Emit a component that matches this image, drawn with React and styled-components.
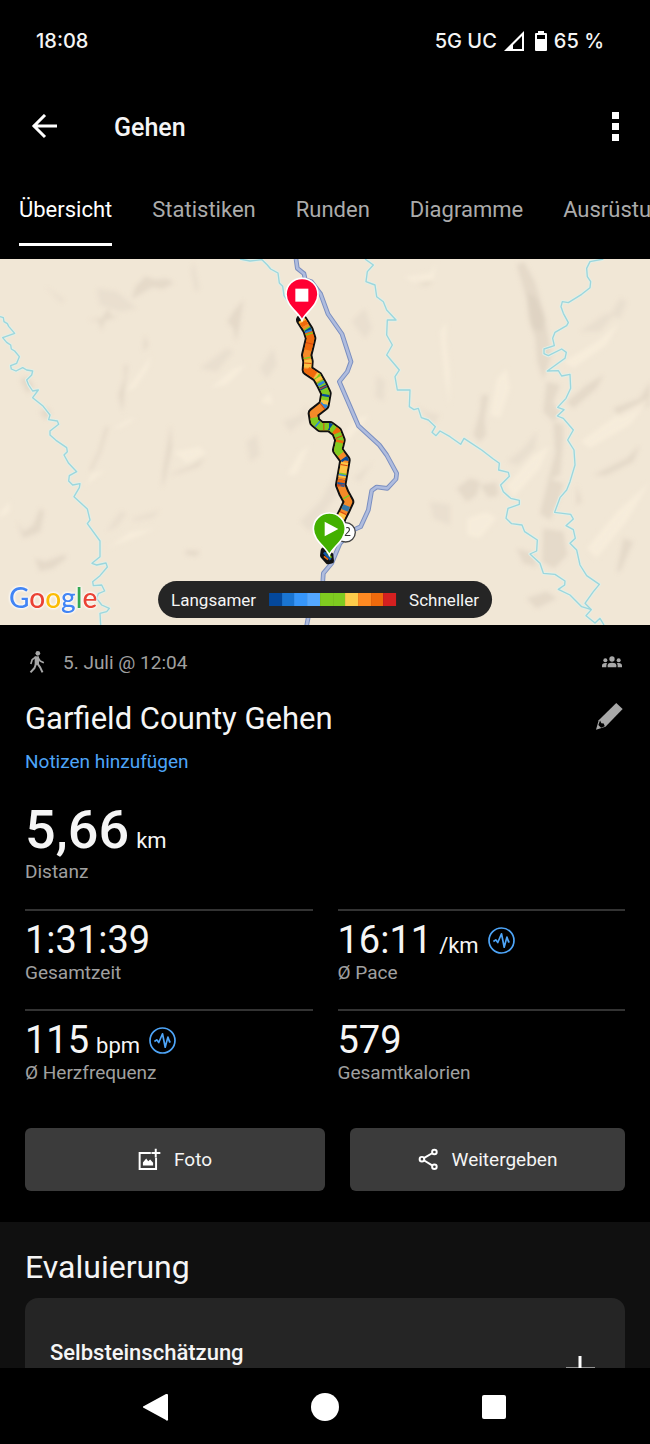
import React, { useState } from 'react';
import styled, { createGlobalStyle } from 'styled-components';

const GlobalStyle = createGlobalStyle`
  * {
    box-sizing: border-box;
  }

  body {
    margin: 0;
    background: #000;
    color: #f5f5f5;
    font-family: Roboto, 'Liberation Sans', sans-serif;
  }

  button {
    font: inherit;
    color: inherit;
    background: none;
    border: none;
    padding: 0;
    cursor: pointer;
  }

  svg {
    display: block;
    flex-shrink: 0;
  }
`;

const Screen = styled.div`
  display: flex;
  flex-direction: column;
  height: 100vh;
`;

const StatusBar = styled.div`
  display: flex;
  align-items: center;
  justify-content: space-between;
  height: 82px;
  padding: 0 46px 0 36px;
  flex-shrink: 0;
  font-family: Inter, Roboto, sans-serif;
  font-size: 20px;
  font-weight: 500;
`;

const StatusIcons = styled.div`
  display: flex;
  align-items: center;
  gap: 7px;
`;

const Battery = styled.svg`
  margin-left: 4px;
`;

const AppBar = styled.header`
  display: flex;
  align-items: center;
  height: 89px;
  padding: 0 28px 0 30px;
  flex-shrink: 0;
`;

const AppTitle = styled.h1`
  flex: 1;
  margin: 0 0 0 56px;
  padding-top: 2px;
  font-size: 25px;
  font-weight: 500;
`;

const TabBar = styled.nav`
  display: flex;
  gap: 40px;
  height: 88px;
  padding: 0 0 13px 19px;
  overflow: hidden;
  flex-shrink: 0;
`;

const Tab = styled.button`
  flex-shrink: 0;
  font-size: 22px;
  color: ${({ $active }) => ($active ? '#ffffff' : '#ababab')};
  border-top: 5px solid transparent;
  border-bottom: 3px solid ${({ $active }) => ($active ? '#ffffff' : 'transparent')};
`;

const Content = styled.main`
  flex: 1;
  min-height: 0;
  overflow: hidden;
`;

const MapArea = styled.div`
  position: relative;
  height: 366px;
  background: #f1e7d6;

  > svg {
    width: 100%;
    height: 100%;
  }
`;

const GoogleMark = styled.div`
  position: absolute;
  left: 9px;
  bottom: 11px;
  font-family: Lato, sans-serif;
  font-size: 28px;
  line-height: 34px;
  font-weight: 500;
  text-shadow: 0 0 3px #fff, 0 0 3px #fff, 0 0 2px #fff;
`;

const Letter = styled.span`
  color: ${({ $color }) => $color};
`;

const Legend = styled.div`
  position: absolute;
  left: 50%;
  bottom: 7px;
  transform: translateX(-50%);
  display: flex;
  align-items: center;
  gap: 13px;
  height: 37px;
  padding: 0 13px;
  border-radius: 19px;
  background: #252525;
  font-size: 17px;
  line-height: 20px;
  white-space: nowrap;
`;

const Scale = styled.div`
  display: flex;
  width: 127px;
  height: 13px;
`;

const ScaleStep = styled.span`
  flex: 1;
  background: ${({ $color }) => $color};
`;

const Summary = styled.section`
  padding: 23px 25px 31px;
`;

const MetaRow = styled.div`
  display: flex;
  align-items: center;
  gap: 15px;
  height: 28px;
  padding: 0 3px 0 2px;
  font-size: 19px;
  color: #a0a0a0;
`;

const MetaDate = styled.span`
  flex: 1;
`;

const TitleRow = styled.div`
  display: flex;
  align-items: center;
  justify-content: space-between;
  margin-top: 22px;
  padding-right: 2px;
`;

const EditButton = styled.button`
  padding-bottom: 6px;
`;

const ActivityName = styled.h2`
  margin: 0;
  font-size: 31px;
  line-height: 42px;
  font-weight: 400;
`;

const NotesLink = styled.a`
  display: block;
  margin-top: 10px;
  font-size: 19px;
  line-height: 24px;
  color: #4ea5f8;
  text-decoration: none;
`;

const Stat = styled.div`
  height: 100px;
  padding-top: 9px;
  border-top: 2px solid #333333;
`;

const StatValue = styled.div`
  display: flex;
  align-items: baseline;
  gap: 7px;
  font-size: ${({ $large }) => ($large ? '54px' : '38px')};
  line-height: ${({ $large }) => ($large ? '54px' : '40px')};
  font-weight: ${({ $large }) => ($large ? 500 : 400)};

  svg {
    align-self: center;
    margin-left: 2px;
  }
`;

const Unit = styled.span`
  font-size: 22px;
  line-height: 24px;
  font-weight: 400;
`;

const StatLabel = styled.div`
  margin-top: ${({ $large }) => ($large ? '3px' : '1px')};
  font-size: 19px;
  line-height: 24px;
  color: #a0a0a0;
`;

const Hero = styled.div`
  margin-top: 29px;
  height: 106px;
`;

const StatGrid = styled.div`
  display: grid;
  grid-template-columns: 1fr 1fr;
  column-gap: 25px;
`;

const Actions = styled.div`
  display: grid;
  grid-template-columns: 12fr 11fr;
  gap: 25px;
  margin-top: 19px;
`;

const ActionButton = styled.button`
  display: flex;
  align-items: center;
  justify-content: center;
  gap: 13px;
  height: 63px;
  border-radius: 6px;
  background: #3b3b3b;
  font-size: 19px;
`;

const Evaluation = styled.section`
  padding: 23px 25px 0;
  background: #101010;
`;

const SectionTitle = styled.h2`
  margin: 0;
  font-size: 32px;
  line-height: 44px;
  font-weight: 400;
`;

const Card = styled.div`
  display: flex;
  align-items: flex-start;
  justify-content: space-between;
  margin-top: 9px;
  padding: 40px 30px 40px 25px;
  border-radius: 13px;
  background: #252525;
`;

const CardTitle = styled.h3`
  margin: 0;
  font-size: 22px;
  line-height: 30px;
  font-weight: 500;
`;

const AddButton = styled.button`
  margin-top: 18px;
`;

const SystemNav = styled.nav`
  display: flex;
  align-items: center;
  justify-content: center;
  gap: 141px;
  height: 76px;
  padding-top: 2px;
  flex-shrink: 0;
  background: #000;
`;

const paceColors = [
  '#04489b', '#1a75d2', '#3696fa', '#54a8ff', '#7fcb20',
  '#7fcb20', '#fdcc4a', '#ff8a22', '#ef6a0c', '#d42020',
];

const googleLetters = [
  ['G', '#4285f4'],
  ['o', '#ea4335'],
  ['o', '#fbbc05'],
  ['g', '#4285f4'],
  ['l', '#34a853'],
  ['e', '#ea4335'],
];

const tabs = ['Übersicht', 'Statistiken', 'Runden', 'Diagramme', 'Ausrüstung'];

const stats = [
  { value: '1:31:39', label: 'Gesamtzeit' },
  { value: '16:11', unit: '/km', label: 'Ø Pace', chart: true },
  { value: '115', unit: 'bpm', label: 'Ø Herzfrequenz', chart: true },
  { value: '579', label: 'Gesamtkalorien' },
];

// Terrain shading, darker slopes first and lit slopes after
const slopes = [
  'M395 132l12-38 30-30 25 10 40-2 20 12-35 18-30-6-30 18z',
  'M265 195l40-5 20-30 8 22 22 2-40 12-12 30-6-28z',
  'M700 170l30-35-10 70-12 55-8-40-18-20z',
  'M430 290l4-50 10 30zM355 420l18-50 0-40 10 0-8 70-8 70z',
  'M270 640l25-50 20-70 12-8-25 80-30 60z',
  'M105 910l30 10 60-22 4 12-40 30-40 8z',
  'M118 470l28-10 6 18-16 16zM60 375l22-10 20 30-20 20z',
  'M485 700l5-60 12-70 10-60 4 70-20 90z',
  'M505 660l70-28 40-25-20 28-60 20z',
  'M560 885l40 3-10 16-35-6zM50 800l20 30 30-20 20-50 12 10-12 60-50 20z',
  'M1550 30l22-10 32 60 26 90 10 50 14 80-24 75-18-55-6-70-20-60-6-60z',
  'M1580 110l30 20 26 60-10 40-30-10z',
  'M1420 540l20-70 5-50 20 0-12 70 5 50-20 20z',
  'M1640 380l40 10-20 50 20 40-20 20-30-30z',
  'M1660 500l30 10 0 40-10 110-36 15 22-80z',
  'M1646 670l44 15-14 50-26 60-30-20z',
  'M1370 700l40-30 30 10-10 40-30 20zM1440 690l50-8 5 40-30 5z',
  'M1630 820l60 10 12 70-40 40-35-20z',
  'M1700 440l60-50 50-30-20 40-70 60zM1840 460l80-30 30-50 0 70-90 40z',
  'M1780 660l100-50 40-40-20 50-80 40zM1730 690l14 50-14 10z',
  'M1870 850l30 10-40 90-10 0zM1580 1030l60-20 30 20-60 30z',
  'M1240 70l60 10-20 12-30-5zM1550 880l50 15 10 40-40-10z',
];

const faintSlopes = [
  'M1130 360l25 20-5 60-25-15zM1055 200l40-40 20 60-20 30z',
  'M780 340l40-60 10 50-30 40zM850 500l50-20 20-30 0 40-50 40z',
  'M900 800l60-60 60-110-10 90-80 110zM1060 670l60-50-40 60z',
  'M400 790l80-25-20 22-60 12zM320 830l40-60 20 5-30 40z',
  'M135 95l60 40-10 8zM580 20l18 80-12 10-12-60z',
  'M290 100l60 10 60 50-50 10-60-20zM600 340l80-60 20 10-50 60z',
  'M1740 230l70-50 40-10-50 60zM1830 180l30-50 20 10-20 50z',
  'M1520 620l50-40 40-50-5 50-50 50zM1250 450l30 20 40 10-20 30z',
  'M1290 740l60 10 0 60-50-20zM740 560l30-20 10 60-30 20z',
];

const ridges = [
  'M1210 65l80-10 20-30-10 50-50 12z',
  'M1320 230l20-30-2 60 12 90-2 100-14-80z',
  'M1470 480l20-110 30-30 10 60-30 90z',
  'M1520 690l80-90 50-30-30 70-80 90z',
  'M1690 320l100-60 70-60-40 70-100 70z',
  'M1740 560l110-80 100-50-60 80-120 70z',
  'M1760 880l90-110 100-90-70 120-90 110z',
  'M1400 790l60-20 30 20-50 60-40-10z',
  'M255 695l20-40 45-10-30 20zM375 410l30-40 50-70-10 40-40 60z',
  'M320 880l70-50 80-10-70 30zM520 590l80-15 20 20-60 30z',
  'M630 400l70-60 40-10-60 60zM780 440l30-30 10 40z',
  'M1010 560l60-70 40-10-70 80zM860 660l40-70 30-20-40 90z',
  'M0 770l30-30 0 30-30 20zM340 520l50-30 20 0-50 30z',
];

const rivers = [
  'M0 185L10 188 12 200 22 206 26 214 44 235 8 248 20 262 32 270 34 282 44 288 58 305 50 325 32 332 34 342 48 348 68 338 80 345 98 348 95 360 80 375 86 390 98 408 115 405 98 428 128 452 150 480 146 494 172 498 176 508 150 528 150 540 168 556 200 578 202 590 192 600 206 625 230 650 208 662 206 678 218 690 240 686 238 698 222 725 262 762 270 795 262 806 300 858 300 905 276 925 290 930 318 924 322 936 300 962 278 980 280 992 305 990 314 1008 295 1016 290 1030 305 1050 328 1060 320 1070 300 1075 302 1110',
  'M1095 12L1120 30 1102 50 1098 80 1125 90 1130 125 1150 140 1160 165 1188 195 1162 195 1160 240 1177 270 1160 300 1198 345 1185 365 1192 405 1230 405 1228 455 1242 464 1255 460 1264 488 1285 495 1306 515 1296 532 1308 542 1320 528 1350 545 1382 568 1392 550 1445 585 1480 612 1498 625 1496 645 1525 652 1528 664 1502 690 1510 710 1532 730 1558 736 1558 748 1524 760 1518 790 1535 806 1566 810 1574 830 1612 855 1610 888 1590 897 1620 925 1630 955 1665 958 1695 978 1694 990 1675 1003 1710 1020 1745 1055 1774 1064',
  'M1810 12L1770 20 1760 40 1762 65 1772 80 1770 98 1745 118 1705 143 1687 140 1683 155 1690 175 1705 203 1700 212 1665 232 1658 250 1663 272 1632 282 1632 296 1645 302 1685 282 1699 292 1695 310 1670 328 1642 348 1675 347 1685 363 1710 358 1712 400 1698 430 1673 457 1692 464 1672 483 1690 490 1720 525 1703 555 1722 585 1725 630 1710 680 1700 705 1680 728 1664 772 1712 778 1720 792 1698 812 1720 824 1726 850 1710 865 1730 885 1740 930 1760 962 1798 988 1780 1010 1755 1045 1774 1064 1758 1082 1785 1104 1800 1090 1812 1110',
  'M720 12L750 18 786 14 802 30 812 42 834 54 838 84 848 94 852 122 866 142 884 160',
];

const road =
  'M888 12L892 40 912 56 916 74 934 80 962 117 984 177 1026 237 1053 320 1042 350 1018 380 1075 512 1138 570 1160 600 1190 655 1188 672 1162 700 1130 696 1115 707 1105 765 1082 815 1060 825 1020 865 995 925 970 955 968 985 926 1080 920 1112';

const track =
  'M905 195L924 225 932 250 925 280 920 300 924 320 922 345 952 365 966 390 978 415 972 450 940 475 944 500 962 515 990 515 1010 530 1020 555 1013 585 1035 615 1030 645 1022 690 1032 715 1046 740 1036 762 1022 790 1012 830';

// Pace along the track, as [colour, dash pattern, offset]
const paceDashes = [
  ['#ef6a0c', '58 900', -40],
  ['#f9c244', '20 1200', 0],
  ['#f9c244', '24 900', -128],
  ['#ef6a0c', '30 900', -156],
  ['#f9c244', '20 900', -188],
  ['#f9c244', '16 900', -270],
  ['#7fcb20', '10 900', -28],
  ['#ef6a0c', '14 22 8 120 9 180 12 60 14 400', -420],
  ['#2f86d8', '6 172 8 62 7 70 5 200', -36],
  ['#04489b', '5 190 9 18 7 140 6 110 8 400', -32],
  ['#7fcb20', '4 70', -46],
  ['#d9480f', '3 58 3 90', -76],
];

function TerrainMap() {
  return (
    <svg viewBox="0 12 1950 1098" preserveAspectRatio="xMidYMid slice" role="img" aria-label="Karte">
      <defs>
        <filter id="soften" x="-5%" y="-5%" width="110%" height="110%">
          <feGaussianBlur stdDeviation="6" />
        </filter>
      </defs>
      <g filter="url(#soften)">
        {slopes.map((d) => (
          <path key={d} d={d} fill="#d9cebd" opacity="0.5" />
        ))}
        {faintSlopes.map((d) => (
          <path key={d} d={d} fill="#d9cebd" opacity="0.28" />
        ))}
        {ridges.map((d) => (
          <path key={d} d={d} fill="#f8eedc" opacity="0.8" />
        ))}
      </g>
      <g fill="none" strokeLinejoin="round">
        {rivers.map((d) => (
          <path key={d} d={d} stroke="#e3efe6" strokeWidth="10" />
        ))}
        {rivers.map((d) => (
          <path key={d} d={d} stroke="#9bd6dd" strokeWidth="4" />
        ))}
        <path d={road} stroke="#7b8fc0" strokeWidth="14" />
        <path d={road} stroke="#afbcde" strokeWidth="8" />
        <path d={track} stroke="#111" strokeWidth="34" strokeLinecap="round" />
        <path d={track} stroke="#f58a28" strokeWidth="22" />
        <g strokeWidth="22">
          <path d="M959 378L966 390 978 415 972 450" stroke="#7fcb20" />
          <path d="M942 488L944 500 962 515 990 515 1010 530 1020 555 1013 585 1022 597" stroke="#7fcb20" />
          <path d="M1034 622L1030 645 1026 668" stroke="#fdc345" />
          <path d="M1025 674L1022 694" stroke="#1158ac" />
          <path d="M1028 776L1022 790 1012 830" stroke="#fdc345" />
          <path d="M1040 752L1034 766" stroke="#3577a8" />
          {paceDashes.map(([color, dash, offset]) => (
            <path key={color + offset} d={track} stroke={color} strokeDasharray={dash} strokeDashoffset={offset} />
          ))}
        </g>
        <path d="M970 886L968 902 984 920 994 918 992 900z" fill="#e8a32c" stroke="#111" strokeWidth="16" />
        <path d="M972 892L992 914" stroke="#1158ac" strokeWidth="8" />
        <path d="M980 890L994 908" stroke="#7fcb20" strokeWidth="5" />
        <path d="M972 904L984 914" stroke="#ef6a0c" strokeWidth="5" />
      </g>
      <circle cx="1037" cy="832" r="29" fill="#fff" stroke="#444" strokeWidth="4" />
      <text x="1031" y="844" fontSize="38" fontFamily="Roboto, sans-serif" textAnchor="middle" fill="#333">
        12
      </text>
      <path
        d="M906 196c-10-24-48-44-48-78a48 48 0 0 1 96 0c0 34-38 54-48 78z"
        fill="#ff0033"
        stroke="#fff"
        strokeWidth="5"
      />
      <path d="M886 101h39v39h-39z" fill="#fff" />
      <path
        d="M988 900c-10-24-48-44-48-78a48 48 0 0 1 96 0c0 34-38 54-48 78z"
        fill="#43b000"
        stroke="#fff"
        strokeWidth="5"
      />
      <path d="M974 800v44l41-22z" fill="#fff" />
    </svg>
  );
}

function SignalIcon() {
  return (
    <svg width="20" height="20" viewBox="0 0 20 20">
      <path d="M20 0v20H0z" fill="#fff" />
      <path d="M18 5v13H9v-4z" fill="#000" />
    </svg>
  );
}

function BatteryIcon() {
  return (
    <Battery width="12" height="20" viewBox="0 0 12 20">
      <path d="M3 0h6v2h2a1 1 0 0 1 1 1v16a1 1 0 0 1-1 1H1a1 1 0 0 1-1-1V3a1 1 0 0 1 1-1h2z" fill="#fff" />
      <path d="M2 4h8v4H2z" fill="#000" />
    </Battery>
  );
}

function WalkIcon() {
  return (
    <svg width="21" height="22" viewBox="86 243 60 66">
      <circle cx="117" cy="250" r="7" fill="#a8a8a8" />
      <g fill="none" stroke="#a8a8a8" strokeLinejoin="round">
        <path d="M114 259v25" strokeWidth="13" />
        <path d="M111 261l-11 8-4 13M117 262l7 11 11 5" strokeWidth="5" />
        <path d="M112 280l-5 14-12 13M116 281l8 11 7 15" strokeWidth="6" />
      </g>
    </svg>
  );
}

function GroupIcon() {
  return (
    <svg width="20" height="12" viewBox="0 0 60 34" fill="#a8a8a8">
      <circle cx="30" cy="8" r="8" />
      <circle cx="10" cy="12" r="6" />
      <circle cx="50" cy="12" r="6" />
      <path d="M17 33v-6c0-6 5-8 13-8s13 2 13 8v6z" />
      <path d="M0 33v-5c0-5 4-8 10-8l6 1c-3 3-3 5-3 12zM60 33v-5c0-5-4-8-10-8l-6 1c3 3 3 5 3 12z" />
    </svg>
  );
}

function PencilIcon() {
  return (
    <svg width="27" height="27" viewBox="0 0 80 80">
      <path d="M60 0l19 18-51 52L0 79l8-28z" fill="#a8a8a8" />
      <path d="M12 52l4 8 7 1 3 8-11 4-8-8z" fill="#000" />
    </svg>
  );
}

function PulseIcon() {
  return (
    <svg width="27" height="27" viewBox="447 708 80 80" fill="none" stroke="#4ea5f8">
      <circle cx="487" cy="748" r="37" strokeWidth="5" />
      <path d="M463 751l7-5 6 8 11-26 8 40 8-30 5 14 3-1" strokeWidth="5" strokeLinejoin="round" />
    </svg>
  );
}

function PhotoIcon() {
  return (
    <svg width="23" height="23" viewBox="28 22 70 70" fill="none" stroke="#fff" strokeWidth="6">
      <path d="M67 37H33v49h50V52" />
      <path d="M82 24v27M69 37h27" />
      <path d="M43 75V66l10-12 6 8 6-5 9 10v8z" fill="#fff" stroke="none" />
    </svg>
  );
}

function ShareIcon() {
  return (
    <svg width="21" height="23" viewBox="868 24 64 70" fill="none" stroke="#fff" strokeWidth="6">
      <path d="M887 54l24-14M887 62l24 15" />
      <circle cx="880" cy="58" r="7" />
      <circle cx="918" cy="36" r="7" />
      <circle cx="918" cy="81" r="7" />
    </svg>
  );
}

function App() {
  const [activeTab, setActiveTab] = useState('Übersicht');

  return (
    <Screen>
      <GlobalStyle />
      <StatusBar>
        <span>18:08</span>
        <StatusIcons>
          <span>5G UC</span>
          <SignalIcon />
          <BatteryIcon />
          <span>65 %</span>
        </StatusIcons>
      </StatusBar>

      <AppBar>
        <button aria-label="Zurück">
          <svg width="28" height="26" viewBox="0 0 28 26" fill="none" stroke="#fff" strokeWidth="3">
            <path d="M3 12h24M15 1L4 12l11 11" />
          </svg>
        </button>
        <AppTitle>Gehen</AppTitle>
        <button aria-label="Mehr">
          <svg width="14" height="29" viewBox="0 0 14 29" fill="#fff">
            <path d="M4 0h7v7H4zM4 11h7v7H4zM4 22h7v7H4z" />
          </svg>
        </button>
      </AppBar>

      <TabBar>
        {tabs.map((tab) => (
          <Tab key={tab} $active={tab === activeTab} onClick={() => setActiveTab(tab)}>
            {tab}
          </Tab>
        ))}
      </TabBar>

      <Content>
        <MapArea>
          <TerrainMap />
          <GoogleMark>
            {googleLetters.map(([letter, color], i) => (
              <Letter key={i} $color={color}>{letter}</Letter>
            ))}
          </GoogleMark>
          <Legend>
            <span>Langsamer</span>
            <Scale>
              {paceColors.map((color, i) => (
                <ScaleStep key={i} $color={color} />
              ))}
            </Scale>
            <span>Schneller</span>
          </Legend>
        </MapArea>

        <Summary>
          <MetaRow>
            <WalkIcon />
            <MetaDate>5. Juli @ 12:04</MetaDate>
            <GroupIcon />
          </MetaRow>
          <TitleRow>
            <ActivityName>Garfield County Gehen</ActivityName>
            <EditButton aria-label="Bearbeiten">
              <PencilIcon />
            </EditButton>
          </TitleRow>
          <NotesLink href="#notizen">Notizen hinzufügen</NotesLink>

          <Hero>
            <StatValue $large>
              5,66 <Unit>km</Unit>
            </StatValue>
            <StatLabel $large>Distanz</StatLabel>
          </Hero>

          <StatGrid>
            {stats.map((stat) => (
              <Stat key={stat.label}>
                <StatValue>
                  {stat.value}
                  {stat.unit && <Unit>{stat.unit}</Unit>}
                  {stat.chart && <PulseIcon />}
                </StatValue>
                <StatLabel>{stat.label}</StatLabel>
              </Stat>
            ))}
          </StatGrid>

          <Actions>
            <ActionButton>
              <PhotoIcon />
              Foto
            </ActionButton>
            <ActionButton>
              <ShareIcon />
              Weitergeben
            </ActionButton>
          </Actions>
        </Summary>

        <Evaluation>
          <SectionTitle>Evaluierung</SectionTitle>
          <Card>
            <CardTitle>Selbsteinschätzung</CardTitle>
            <AddButton aria-label="Selbsteinschätzung hinzufügen">
              <svg width="29" height="29" viewBox="0 0 29 29" stroke="#fff" strokeWidth="3">
                <path d="M14 0v29M0 13h29" />
              </svg>
            </AddButton>
          </Card>
        </Evaluation>
      </Content>

      <SystemNav>
        <button aria-label="Zurück">
          <svg width="28" height="28" viewBox="0 0 28 28" fill="#fff">
            <path d="M25 1a1 1 0 0 1 1 1v24a1 1 0 0 1-2 1L2 15a1 1 0 0 1 0-2L24 1z" />
          </svg>
        </button>
        <button aria-label="Startbildschirm">
          <svg width="28" height="28" viewBox="0 0 28 28" fill="#fff">
            <circle cx="14" cy="14" r="14" />
          </svg>
        </button>
        <button aria-label="Letzte Apps">
          <svg width="28" height="28" viewBox="0 0 28 28" fill="#fff">
            <rect x="2" y="2" width="24" height="24" rx="2" />
          </svg>
        </button>
      </SystemNav>
    </Screen>
  );
}

export default App;
